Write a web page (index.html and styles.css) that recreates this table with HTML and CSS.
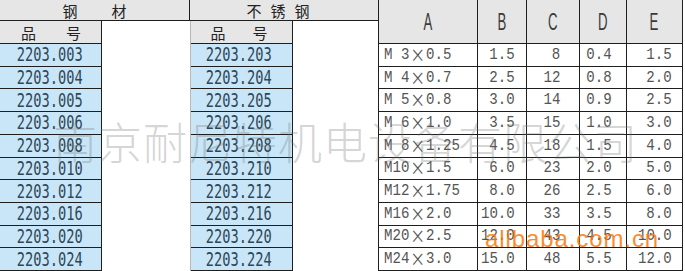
FILE: index.html
```html
<!DOCTYPE html>
<html lang="zh">
<head>
<meta charset="utf-8">
<title>螺纹规格表</title>
<link rel="stylesheet" href="styles.css">
</head>
<body>
<div class="sheet">
  <div class="left">
    <div class="head-row">
      <div class="h1 steel"><span>钢</span><span>材</span></div>
      <div class="h1 ss"><span>不</span><span>锈</span><span>钢</span></div>
    </div>
    <div class="body-row">
      <div class="col blue-col first">
        <div class="sub"><span>品</span><span>号</span></div>
        <div class="num"><span>2203.003</span></div>
        <div class="num"><span>2203.004</span></div>
        <div class="num"><span>2203.005</span></div>
        <div class="num"><span>2203.006</span></div>
        <div class="num"><span>2203.008</span></div>
        <div class="num"><span>2203.010</span></div>
        <div class="num"><span>2203.012</span></div>
        <div class="num"><span>2203.016</span></div>
        <div class="num"><span>2203.020</span></div>
        <div class="num"><span>2203.024</span></div>
      </div>
      <div class="col blank first-blank"></div>
      <div class="col blue-col second">
        <div class="sub sub2"><span>品</span><span>号</span></div>
        <div class="num"><span>2203.203</span></div>
        <div class="num"><span>2203.204</span></div>
        <div class="num"><span>2203.205</span></div>
        <div class="num"><span>2203.206</span></div>
        <div class="num"><span>2203.208</span></div>
        <div class="num"><span>2203.210</span></div>
        <div class="num"><span>2203.212</span></div>
        <div class="num"><span>2203.216</span></div>
        <div class="num"><span>2203.220</span></div>
        <div class="num"><span>2203.224</span></div>
      </div>
      <div class="col blank second-blank"></div>
    </div>
  </div>

  <div class="spec">
    <div class="th"><span>A</span></div>
    <div class="th"><span>B</span></div>
    <div class="th"><span>C</span></div>
    <div class="th"><span>D</span></div>
    <div class="th"><span>E</span></div>

    <div class="td a"><span>M 3<i class="x">×</i>0.5</span></div><div class="td b"><span>1.5</span></div><div class="td c"><span>8</span></div><div class="td d"><span>0.4</span></div><div class="td e"><span>1.5</span></div>
    <div class="td a"><span>M 4<i class="x">×</i>0.7</span></div><div class="td b"><span>2.5</span></div><div class="td c"><span>12</span></div><div class="td d"><span>0.8</span></div><div class="td e"><span>2.0</span></div>
    <div class="td a"><span>M 5<i class="x">×</i>0.8</span></div><div class="td b"><span>3.0</span></div><div class="td c"><span>14</span></div><div class="td d"><span>0.9</span></div><div class="td e"><span>2.5</span></div>
    <div class="td a"><span>M 6<i class="x">×</i>1.0</span></div><div class="td b"><span>3.5</span></div><div class="td c"><span>15</span></div><div class="td d"><span>1.0</span></div><div class="td e"><span>3.0</span></div>
    <div class="td a"><span>M 8<i class="x">×</i>1.25</span></div><div class="td b"><span>4.5</span></div><div class="td c"><span>18</span></div><div class="td d"><span>1.5</span></div><div class="td e"><span>4.0</span></div>
    <div class="td a"><span>M10<i class="x">×</i>1.5</span></div><div class="td b"><span>6.0</span></div><div class="td c"><span>23</span></div><div class="td d"><span>2.0</span></div><div class="td e"><span>5.0</span></div>
    <div class="td a"><span>M12<i class="x">×</i>1.75</span></div><div class="td b"><span>8.0</span></div><div class="td c"><span>26</span></div><div class="td d"><span>2.5</span></div><div class="td e"><span>6.0</span></div>
    <div class="td a"><span>M16<i class="x">×</i>2.0</span></div><div class="td b"><span>10.0</span></div><div class="td c"><span>33</span></div><div class="td d"><span>3.5</span></div><div class="td e"><span>8.0</span></div>
    <div class="td a"><span>M20<i class="x">×</i>2.5</span></div><div class="td b"><span>12.0</span></div><div class="td c"><span>43</span></div><div class="td d"><span>4.5</span></div><div class="td e"><span>10.0</span></div>
    <div class="td a"><span>M24<i class="x">×</i>3.0</span></div><div class="td b"><span>15.0</span></div><div class="td c"><span>48</span></div><div class="td d"><span>5.5</span></div><div class="td e"><span>12.0</span></div>
  </div>

  <div class="wm">南京耐尼特机电设备有限公司</div>
  <div class="ali">alibaba.com.cn</div>
</div>
</body>
</html>
```

FILE: styles.css
```css
html, body {
  margin: 0;
  padding: 0;
  background: #fff;
}

.sheet {
  position: relative;
  width: 685px;
  height: 271px;
  display: flex;
  overflow: hidden;
  background: #fff;
}

/* ---------- left part ---------- */
.left {
  width: 378px;
  height: 271px;
  display: flex;
  flex-direction: column;
}

.head-row {
  height: 21px;
  display: flex;
  background: #e6e6e6;
  border-bottom: 1px solid #1e1e1e;
  box-sizing: border-box;
}

.h1 {
  display: flex;
  justify-content: center;
  align-items: center;
  font-family: "Noto Sans CJK SC", sans-serif;
  font-size: 15px;
  line-height: 1;
  color: #222;
  box-sizing: border-box;
}

.steel {
  width: 190px;
  gap: 34px;
  border-right: 1px solid #1e1e1e;
}

.ss {
  width: 188px;
  gap: 9px;
  padding-right: 12px;
}

.body-row {
  flex: 1;
  display: flex;
}

.col {
  height: 100%;
  box-sizing: border-box;
}

.blue-col {
  display: flex;
  flex-direction: column;
  border-right: 1px solid #1e1e1e;
}

.first { width: 102px; }
.first-blank { width: 88px; }
.second { width: 103px; border-left: 1px solid #b8b8b8; }
.second-blank { width: 85px; }

.sub {
  height: 23px;
  flex: none;
  display: flex;
  justify-content: center;
  align-items: center;
  gap: 30px;
  background: #e6e6e6;
  border-bottom: 1px solid #1e1e1e;
  box-sizing: border-box;
  font-family: "Noto Sans CJK SC", sans-serif;
  font-size: 15px;
  line-height: 1;
  color: #222;
  padding-left: 1px;
}

.sub2 {
  gap: 27px;
  padding-right: 6px;
}

.num {
  flex: 1;
  display: flex;
  justify-content: center;
  align-items: center;
  background: #c8e6f8;
  border-bottom: 1px solid #1e1e1e;
  box-sizing: border-box;
}

.num span {
  display: inline-block;
  font-family: "DejaVu Sans Mono", monospace;
  font-size: 19px;
  line-height: 1;
  color: #2f4657;
  transform: scaleX(0.72);
  margin-right: 2px;
}

.second .num span { margin-right: 6px; }

/* ---------- right spec table ---------- */
.spec {
  width: 305px;
  height: 271px;
  display: grid;
  grid-template-columns: 99px 49px 53px 47px 56px;
  grid-template-rows: 44px repeat(10, 1fr);
  border-left: 1px solid #1e1e1e;
  box-sizing: border-box;
}

.th, .td {
  border-right: 1px solid #1e1e1e;
  border-bottom: 1px solid #1e1e1e;
  display: flex;
  align-items: center;
  box-sizing: border-box;
  overflow: hidden;
}

.th {
  background: #e6e6e6;
  justify-content: center;
}

.th span {
  display: inline-block;
  font-family: "Liberation Sans", sans-serif;
  font-size: 24px;
  line-height: 1;
  color: #3a3a3a;
  transform: scaleX(0.55);
  margin-top: 1px;
}

.td span {
  display: inline-block;
  font-family: "Liberation Mono", monospace;
  font-size: 17px;
  line-height: 18px;
  color: #555;
  white-space: pre;
  transform: scaleX(0.83);
  transform-origin: right center;
}

.td .x {
  font-style: normal;
  display: inline-block;
  vertical-align: top;
  width: 20px;
  line-height: 16px;
  text-align: center;
  font-family: "Noto Sans CJK SC", sans-serif;
  font-size: 18px;
  color: #555;
}

.td.a { justify-content: flex-start; padding-left: 5px; }
.td.a span { transform-origin: left center; }
.td.b { justify-content: flex-end; padding-right: 11px; }
.td.c { justify-content: flex-end; padding-right: 19px; }
.td.d { justify-content: flex-end; padding-right: 14px; }
.td.e { justify-content: flex-end; padding-right: 10px; }

/* ---------- watermarks ---------- */
.wm {
  position: absolute;
  left: 53px;
  top: 119px;
  font-family: "Noto Sans CJK SC", sans-serif;
  font-weight: 200;
  font-size: 44px;
  line-height: 44px;
  letter-spacing: 1px;
  color: rgba(110, 110, 110, 0.3);
  white-space: nowrap;
  pointer-events: none;
}

.ali {
  position: absolute;
  left: 485px;
  top: 227px;
  font-family: "Liberation Sans", sans-serif;
  font-size: 24px;
  line-height: 1;
  letter-spacing: 0.9px;
  color: rgba(255, 118, 0, 0.85);
  white-space: nowrap;
  pointer-events: none;
}
```
